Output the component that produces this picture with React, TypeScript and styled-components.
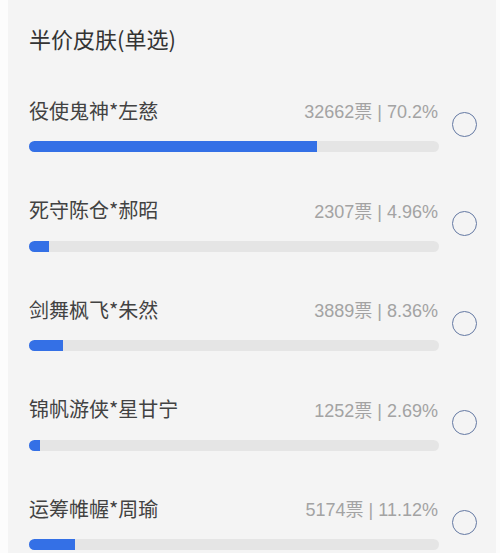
import React, { ReactElement } from "react";
import styled, { createGlobalStyle } from "styled-components";

const texts = {
  title: "半价皮肤(单选)",
  unit: "票",
};

interface Option {
  name: string;
  votes: number;
  percent: string;
}

const options: Option[] = [
  { name: "役使鬼神*左慈", votes: 32662, percent: "70.2" },
  { name: "死守陈仓*郝昭", votes: 2307, percent: "4.96" },
  { name: "剑舞枫飞*朱然", votes: 3889, percent: "8.36" },
  { name: "锦帆游侠*星甘宁", votes: 1252, percent: "2.69" },
  { name: "运筹帷幄*周瑜", votes: 5174, percent: "11.12" },
];

const GlobalStyle = createGlobalStyle`
  html, body {
    margin: 0;
    padding: 0;
    background: #fcfcfc;
    overflow: hidden;
  }
  body {
    font-family: "Noto Sans CJK SC", "Noto Sans", sans-serif;
  }
`;

const Panel = styled.section`
  margin-left: 8px;
  width: 488px;
  height: 553px;
  box-sizing: border-box;
  padding: 23px 19px 0 21px;
  background: #f4f4f4;
  overflow: hidden;
`;

const Title = styled.h2`
  margin: 0 0 43px;
  font-size: 22px;
  line-height: 30px;
  font-weight: 400;
  color: #333333;
`;

const OptionRow = styled.div`
  display: flex;
  align-items: center;
  gap: 13px;
  height: 56px;
  margin-bottom: 43.5px;
`;

const OptionBody = styled.div`
  flex: 1;
  min-width: 0;
`;

const OptionHeader = styled.div`
  display: flex;
  justify-content: space-between;
  align-items: center;
  height: 28px;
  margin-bottom: 17px;
`;

const OptionName = styled.span`
  font-size: 20px;
  color: #424242;
`;

const OptionStats = styled.span`
  font-family: "Liberation Sans", "Noto Sans CJK SC", sans-serif;
  font-size: 18px;
  color: #a3a3a3;
  margin-right: 1px;
`;

const Divider = styled.span`
  margin: 0 5px;
  font-weight: 300;
`;

const Track = styled.div`
  height: 11px;
  border-radius: 6px;
  background: #e5e5e5;
  overflow: hidden;
`;

const Fill = styled.div`
  height: 100%;
  background: #3470e6;
`;

const Radio = styled.button`
  flex: none;
  width: 25px;
  height: 25px;
  padding: 0;
  border: 1.6px solid #6479a3;
  border-radius: 50%;
  background: transparent;
`;

const OptionItem = ({ name, votes, percent }: Option) => (
  <OptionRow>
    <OptionBody>
      <OptionHeader>
        <OptionName>{name}</OptionName>
        <OptionStats>
          {votes}
          {texts.unit}
          <Divider>|</Divider>
          {percent}%
        </OptionStats>
      </OptionHeader>
      <Track>
        <Fill style={{ width: `${percent}%` }} />
      </Track>
    </OptionBody>
    <Radio type="button" aria-label={name} />
  </OptionRow>
);

const App = (): ReactElement => (
  <>
    <GlobalStyle />
    <Panel>
      <Title>{texts.title}</Title>
      {options.map((o) => (
        <OptionItem key={o.name} {...o} />
      ))}
    </Panel>
  </>
);

export default App;
